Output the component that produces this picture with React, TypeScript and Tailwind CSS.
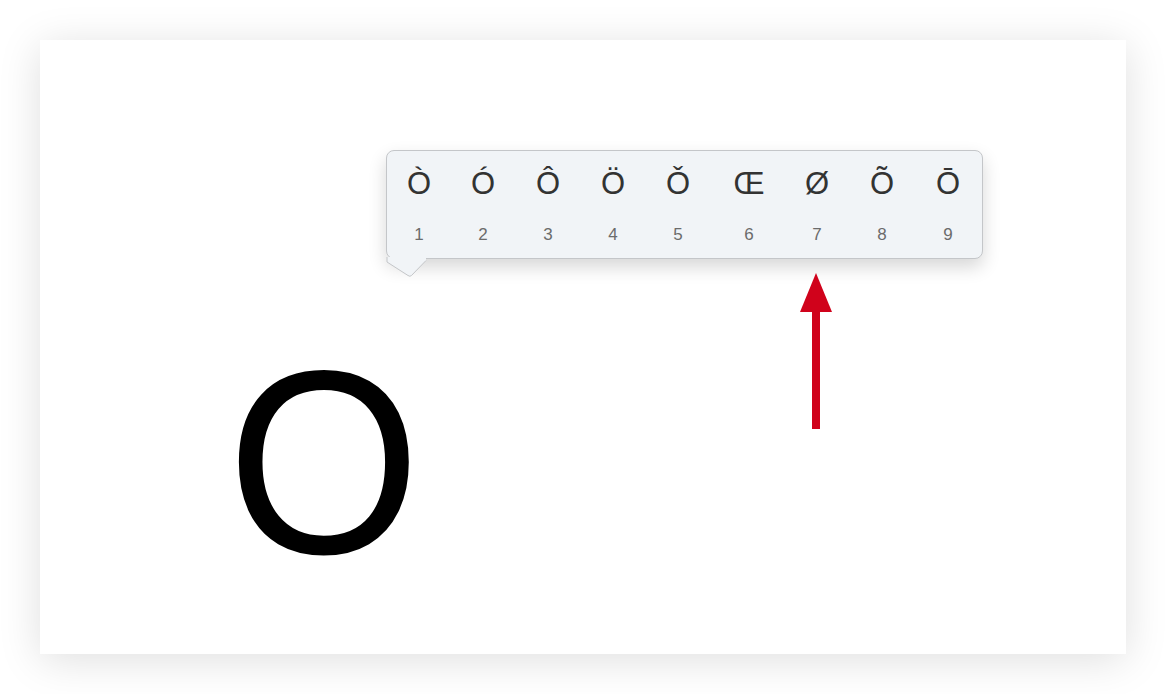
const accents = [
  { ch: "Ò", n: "1", w: "w-[64px]" },
  { ch: "Ó", n: "2", w: "w-[64px]" },
  { ch: "Ô", n: "3", w: "w-[66px]" },
  { ch: "Ö", n: "4", w: "w-[64px]" },
  { ch: "Ǒ", n: "5", w: "w-[66px]" },
  { ch: "Œ", n: "6", w: "w-[76px]" },
  { ch: "Ø", n: "7", w: "w-[60px]" },
  { ch: "Õ", n: "8", w: "w-[70px]" },
  { ch: "Ō", n: "9", w: "w-[62px]" },
];

function AccentPopup() {
  return (
    <div className="absolute left-[346px] top-[110px] w-[597px] h-[109px] rounded-[8px] border border-[#c4c6c9] bg-[#f1f4f7] shadow-[0_8px_18px_rgba(0,0,0,0.16)]">
      <div className="flex pt-[17px]">
        {accents.map(a => (
          <div key={a.n} className={`${a.w} flex flex-col items-center`}>
            <span className="text-[31px] leading-none text-[#333333]">{a.ch}</span>
            <span className="mt-[27px] text-[17px] leading-none text-[#6b6b6b]">{a.n}</span>
          </div>
        ))}
      </div>
      {/* tail */}
      <svg className="absolute left-[-1px] top-[106px]" width="44" height="22" viewBox="0 0 44 22">
        <path d="M1 0 L1 5 L22 18.5 Q24 20 25.5 18.5 L40 3.5 L40 0 Z" fill="#f1f4f7" />
        <path d="M1 0 L1 5 L22 18.5 Q24 20 25.5 18.5 L40 3.5" fill="none" stroke="#c4c6c9" strokeWidth="1" />
      </svg>
    </div>
  );
}

function Arrow() {
  return (
    <svg className="absolute left-[758px] top-[232px]" width="36" height="160" viewBox="0 0 36 160">
      <polygon points="18,1 34,40 2,40" fill="#d0021b" />
      <rect x="14" y="39" width="8" height="118" fill="#d0021b" />
    </svg>
  );
}

export default function App() {
  return (
    <div className="w-[1166px] h-[694px] bg-white p-[40px] font-['Liberation_Sans',Arial,sans-serif]">
      <div className="relative w-[1086px] h-[614px] bg-white shadow-[0_6px_40px_rgba(0,0,0,0.13)]">
        <span className="absolute left-[182px] top-[292px] text-[262px] leading-none text-black scale-x-[0.95]">O</span>
        <AccentPopup />
        <Arrow />
      </div>
    </div>
  );
}
